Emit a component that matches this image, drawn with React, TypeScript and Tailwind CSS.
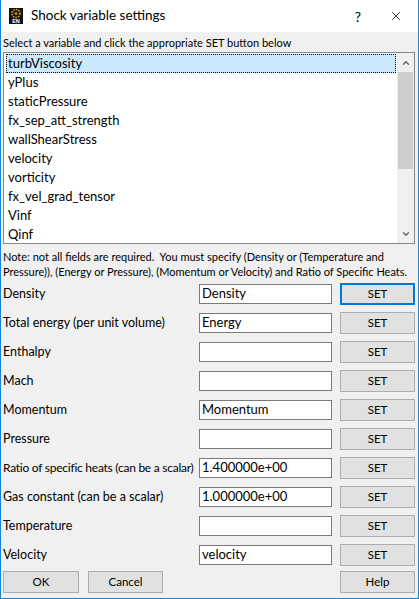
import { ChevronDown, ChevronUp, X } from "lucide-react";

const variables = [
  "turbViscosity",
  "yPlus",
  "staticPressure",
  "fx_sep_att_strength",
  "wallShearStress",
  "velocity",
  "vorticity",
  "fx_vel_grad_tensor",
  "Vinf",
  "Qinf",
];

type Field = { label: string; value: string; focused?: boolean; tight?: boolean };

const fields: Field[] = [
  { label: "Density", value: "Density", focused: true },
  { label: "Total energy (per unit volume)", value: "Energy" },
  { label: "Enthalpy", value: "" },
  { label: "Mach", value: "" },
  { label: "Momentum", value: "Momentum" },
  { label: "Pressure", value: "" },
  { label: "Ratio of specific heats (can be a scalar)", value: "1.400000e+00", tight: true },
  { label: "Gas constant (can be a scalar)", value: "1.000000e+00" },
  { label: "Temperature", value: "" },
  { label: "Velocity", value: "velocity" },
];

function AppIcon() {
  return (
    <svg width="14" height="16" viewBox="0 0 14 16">
      <rect width="14" height="16" fill="#111" />
      <circle cx="7" cy="5.5" r="4" fill="none" stroke="#d9a21b" strokeWidth="1.6" strokeDasharray="1.6 1" />
      <circle cx="7" cy="5.5" r="1.6" fill="#c08418" />
      <text x="7" y="15" textAnchor="middle" fontSize="5.5" fontWeight="bold" fill="#fff" fontFamily="Liberation Sans, sans-serif">
        EN
      </text>
    </svg>
  );
}

function WinButton({ label, focused }: { label: string; focused?: boolean }) {
  return (
    <button
      className={
        focused
          ? "h-[22px] w-[75px] border-2 border-[#0078d7] bg-[#e1e1e1] text-[11.5px] text-black"
          : "h-[22px] w-[75px] border border-[#adadad] bg-[#e1e1e1] text-[11.5px] text-black"
      }
    >
      {label}
    </button>
  );
}

export default function App() {
  return (
    <div
      className="flex h-[599px] w-[419px] flex-col overflow-hidden border-x border-b border-[#1883d7] bg-[#f0f0f0] text-[13px] text-black"
      style={{ fontFamily: "Lato, \"Liberation Sans\", sans-serif" }}
    >
      {/* title bar */}
      <div className="flex h-[32px] shrink-0 items-center bg-white">
        <div className="ml-[8px] flex w-[22px]">
          <AppIcon />
        </div>
        <span className="text-[13.5px] leading-none">Shock variable settings</span>
        <span className="ml-auto mr-[28px] text-[14px]">?</span>
        <X className="mr-[15px] h-[14px] w-[14px]" strokeWidth={1.3} />
      </div>

      <div className="flex flex-1 flex-col pl-[2px] pr-[3px]">
        <p className="flex h-[20px] shrink-0 items-center whitespace-nowrap text-[11px] leading-none">
          Select a variable and click the appropriate SET button below
        </p>

        {/* variable list */}
        <div className="flex h-[192px] shrink-0 border border-[#828790] bg-white">
          <div className="flex-1 overflow-hidden pl-[2px] pr-[1px] pt-[1px]">
            {variables.map((v, i) => (
              <div
                key={v}
                className={
                  i === 0
                    ? "flex h-[19px] items-center border border-dotted border-black bg-[#cce8ff] pl-[1px]"
                    : "flex h-[19px] items-center pl-[2px]"
                }
              >
                {v}
              </div>
            ))}
          </div>
          <div className="flex w-[17px] flex-col bg-[#f0f0f0]">
            <div className="flex h-[19px] items-center justify-center">
              <ChevronUp className="h-[10px] w-[10px] text-[#606060]" strokeWidth={3} />
            </div>
            <div className="mx-auto h-[97px] w-[15px] bg-[#cdcdcd]" />
            <div className="flex-1" />
            <div className="flex h-[19px] items-center justify-center">
              <ChevronDown className="h-[10px] w-[10px] text-[#606060]" strokeWidth={3} />
            </div>
          </div>
        </div>

        <p className="mt-[5px] h-[30px] shrink-0 text-[11px] leading-[15px]">
          Note: not all fields are required.&nbsp; You must specify (Density or (Temperature and Pressure)), (Energy or Pressure), (Momentum or Velocity) and Ratio of Specific Heats.
        </p>

        {/* fields */}
        <div className="flex shrink-0 flex-col">
          {fields.map((f) => (
            <div key={f.label} className="flex h-[29px] items-center">
              <span
                className={
                  f.tight
                    ? "w-[196px] whitespace-nowrap pt-[1px] text-[12px] tracking-[-0.25px]"
                    : "w-[196px] whitespace-nowrap pt-[1px] text-[12.5px]"
                }
              >
                {f.label}
              </span>
              <div className="flex h-[20px] w-[133px] items-center border border-[#7a7a7a] bg-white px-[2px]">
                {f.value}
              </div>
              <div className="ml-[8px]">
                <WinButton label="SET" focused={f.focused} />
              </div>
            </div>
          ))}
        </div>

        <div className="mt-[2px] flex shrink-0 items-center text-[11.5px]">
          <button className="h-[22px] w-[76px] border border-[#adadad] bg-[#e1e1e1]">OK</button>
          <button className="ml-[9px] h-[22px] w-[75px] border border-[#adadad] bg-[#e1e1e1]">Cancel</button>
          <button className="ml-auto h-[22px] w-[75px] border border-[#adadad] bg-[#e1e1e1]">Help</button>
        </div>
      </div>
    </div>
  );
}
